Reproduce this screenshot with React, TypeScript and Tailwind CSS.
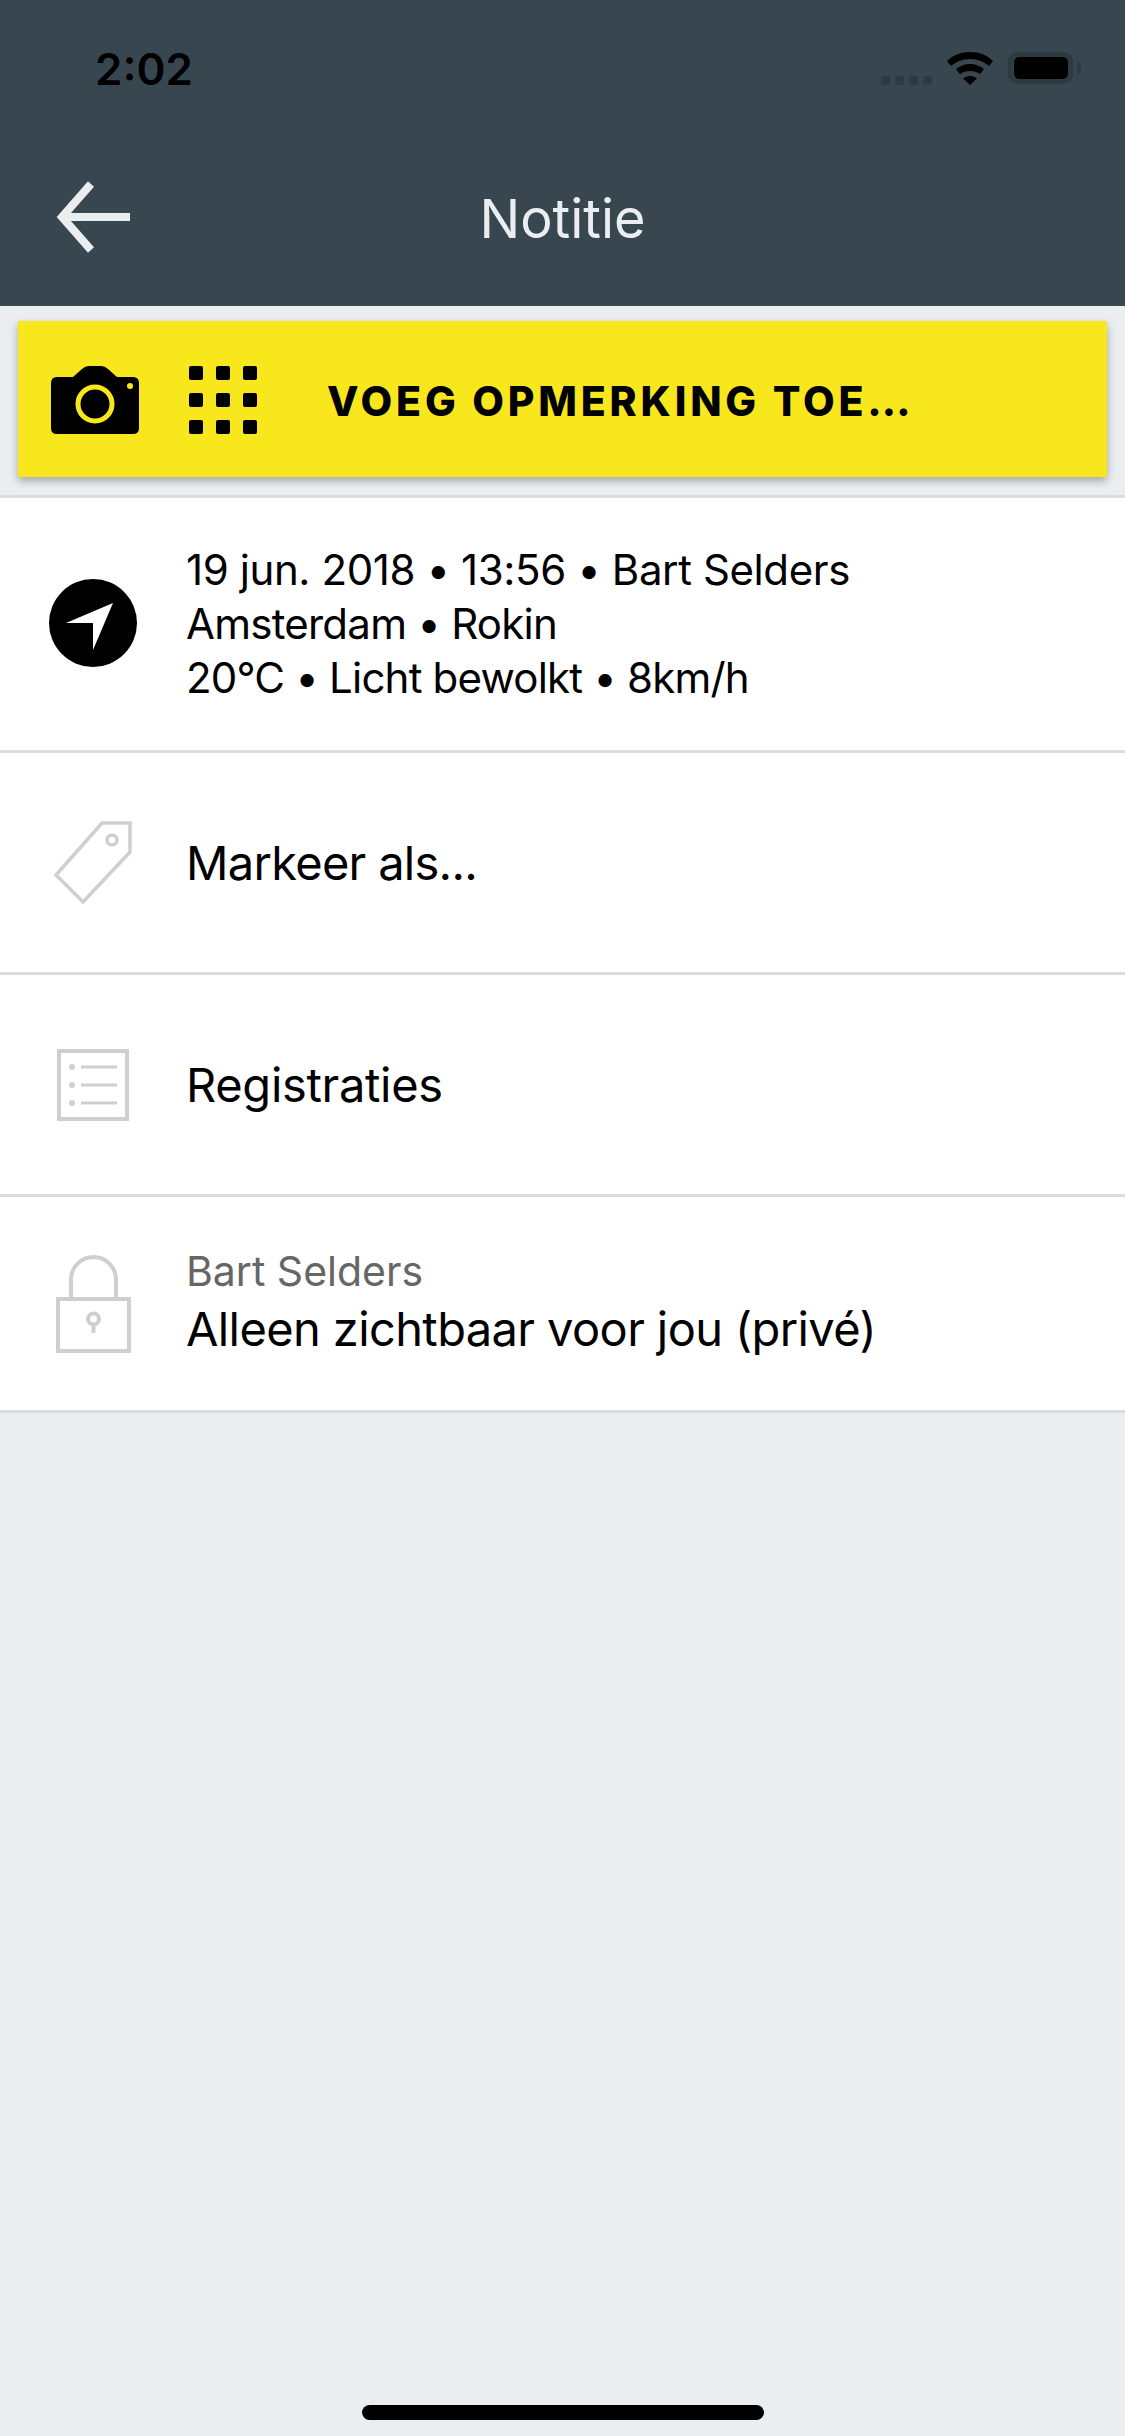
const textFont = "font-['Inter',sans-serif]";

const Row = ({
  icon,
  children,
  height,
}: {
  icon: React.ReactNode;
  children: React.ReactNode;
  height: string;
}) => (
  <div className={`flex items-center bg-white border-b-[3px] border-[#dcdcdc] ${height}`}>
    <div className="flex w-[186px] shrink-0 justify-center">{icon}</div>
    <div className="min-w-0 flex-1">{children}</div>
  </div>
);

const StatusBar = () => (
  <div className="flex h-[110px] items-start justify-between pl-[95px] pr-[44px] pt-[46px]">
    <span className="text-[44px] font-semibold leading-[46px] text-black">2:02</span>
    <div className="flex items-start pt-[6px]">
      <svg width="52" height="9" viewBox="0 0 52 9" className="mt-[24px]">
        <g fill="#2c3a42">
          <rect x="0" y="0" width="9" height="9" rx="3" />
          <rect x="14" y="0" width="9" height="9" rx="3" />
          <rect x="28" y="0" width="9" height="9" rx="3" />
          <rect x="42" y="0" width="9" height="9" rx="3" />
        </g>
      </svg>
      <svg width="46" height="33" viewBox="0 0 46 33" className="ml-[14px]">
        <path d="M23 0C14 0 6 3 0 9l4 5c5-4 11-7 19-7s14 3 19 7l4-5C40 3 32 0 23 0Z" />
        <path d="M23 12c-6 0-10 2-14 5l4 5c3-2 6-3 10-3s7 1 10 3l4-5c-4-3-8-5-14-5Z" />
        <path d="M23 24c-3 0-5 1-7 2.500L23 33l7-6.500C28 25 26 24 23 24Z" />
      </svg>
      <div className="ml-[15px] flex items-center">
        <div className="flex h-[32px] w-[65px] items-center justify-center rounded-[9px] border-[5px] border-[#2c3a42]">
          <div className="h-[22px] w-[54px] shrink-0 rounded-[5px] bg-black" />
        </div>
        <div className="ml-[4px] h-[12px] w-[4px] rounded-r-full bg-[#2c3a42]" />
      </div>
    </div>
  </div>
);

const Camera = () => (
  <svg width="88" height="68" viewBox="0 0 88 68">
    <path
      fill="#000"
      d="M6 11h16L31 3q3-3 7-3h12q4 0 7 3l9 8h16q6 0 6 6v45q0 6-6 6H6q-6 0-6-6V17q0-6 6-6Z"
    />
    <circle cx="44" cy="38" r="17" fill="none" stroke="#f9e71e" strokeWidth="5" />
    <circle cx="79" cy="20" r="3" fill="#f9e71e" />
  </svg>
);

const Keypad = () => (
  <div className="grid w-[68px] grid-cols-3 gap-x-[13px] gap-y-[13px]">
    {Array.from({ length: 9 }).map((_, i) => (
      <div key={i} className="h-[14px] w-[14px] rounded-[2px] bg-black" />
    ))}
  </div>
);

const Compass = () => (
  <svg width="88" height="88" viewBox="0 0 88 88" className="mb-[3px]">
    <circle cx="44" cy="44" r="44" fill="#000" />
    <path d="M64 24 17 44H44V71Z" fill="#fff" />
  </svg>
);

const Tag = () => (
  <svg width="80" height="84" viewBox="0 0 80 84" fill="none" stroke="#cfcfcf" strokeWidth="3.500">
    <path d="M49 2h28v29L30 81 3 54Z" />
    <circle cx="59" cy="19" r="5" />
  </svg>
);

const ListIcon = () => (
  <svg width="72" height="72" viewBox="0 0 72 72" fill="none" stroke="#cfcfcf">
    <rect x="2" y="2" width="68" height="68" strokeWidth="4" />
    <g fill="#cfcfcf" stroke="none">
      <circle cx="15" cy="18" r="3" />
      <circle cx="15" cy="36" r="3" />
      <circle cx="15" cy="54" r="3" />
      <rect x="24" y="16.500" width="36" height="3" />
      <rect x="24" y="34.500" width="36" height="3" />
      <rect x="24" y="52.500" width="36" height="3" />
    </g>
  </svg>
);

const Lock = () => (
  <svg width="75" height="98" viewBox="0 0 75 98" fill="none" stroke="#cfcfcf" strokeWidth="4">
    <path d="M15 44V24.500a22.500 22.500 0 0 1 45 0V44" />
    <rect x="2" y="44" width="71" height="52" />
    <circle cx="37.500" cy="64" r="5.500" />
    <path d="M37.500 69v9" />
  </svg>
);

export default function App() {
  return (
    <div className={`flex h-[2436px] w-[1125px] flex-col bg-[#ebeef1] ${textFont}`}>
      <header className="h-[306px] bg-[#38474f]">
        <StatusBar />
        <div className="relative flex h-[196px] items-center justify-center pt-[21px]">
          <svg width="74" height="72" viewBox="0 0 74 72" fill="none" stroke="#ebeef1" strokeWidth="8" className="absolute left-[56px] top-[71px]">
            <path d="M35 3 6 36l29 33M6 36h68" />
          </svg>
          <h1 className="text-[54px] leading-none text-[#ebeef1]">Notitie</h1>
        </div>
      </header>

      <div className="px-[18px] pb-[18px] pt-[15px] border-b-[3px] border-[#dcdcdc]">
        <div className="flex h-[156px] items-center bg-[#f9e71e] pl-[33px] pt-[2px] shadow-[0_4px_8px_rgba(0,0,0,0.3)]">
          <Camera />
          <div className="ml-[50px]">
            <Keypad />
          </div>
          <span className="ml-[70px] pt-[3px] text-[41px] font-extrabold tracking-[3.800px] text-black">VOEG OPMERKING TOE…</span>
        </div>
      </div>

      <Row height="h-[255px]" icon={<Compass />}>
        <div className="text-[42px] leading-[54px] text-black">
          <p className="tracking-[-0.4px]">19 jun. 2018 • 13:56 • Bart Selders</p>
          <p className="tracking-[-0.75px]">Amsterdam • Rokin</p>
          <p className="tracking-[-0.8px]">20°C • Licht bewolkt • 8km/h</p>
        </div>
      </Row>
      <Row height="h-[222px]" icon={<Tag />}>
        <p className="text-[47px] leading-[56px] tracking-[-0.7px] text-black">Markeer als...</p>
      </Row>
      <Row height="h-[222px]" icon={<ListIcon />}>
        <p className="text-[47px] leading-[56px] tracking-[-0.3px] text-black">Registraties</p>
      </Row>
      <Row height="h-[216px]" icon={<Lock />}>
        <p className="text-[41px] leading-[50px] text-[#666666]">Bart Selders</p>
        <p className="text-[47px] leading-[66px] tracking-[-0.6px] text-black">Alleen zichtbaar voor jou (privé)</p>
      </Row>

      <div className="mt-auto flex justify-center pb-[16px]">
        <div className="h-[15px] w-[402px] rounded-full bg-black" />
      </div>
    </div>
  );
}
